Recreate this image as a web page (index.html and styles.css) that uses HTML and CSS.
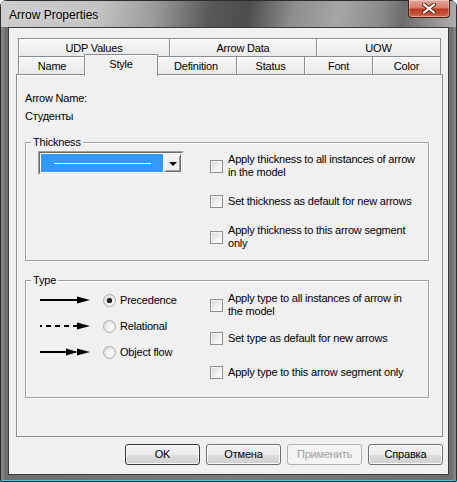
FILE: index.html
```html
<!DOCTYPE html>
<html>
<head>
<meta charset="utf-8">
<title>Arrow Properties</title>
<link rel="stylesheet" href="styles.css">
</head>
<body>
<div class="window">
  <div class="titlebar">
    <span class="title">Arrow Properties</span>
    <div class="close">
      <svg width="14" height="11" viewBox="0 0 14 11"><path d="M2 1.5 L12 9.5 M12 1.5 L2 9.5" stroke="#5a2418" stroke-width="4" stroke-linecap="round"/><path d="M2 1.5 L12 9.5 M12 1.5 L2 9.5" stroke="#fff" stroke-width="2.2" stroke-linecap="round"/></svg>
    </div>
  </div>
  <div class="client">
    <div class="tabs">
      <div class="row row1">
        <div class="tab w152">UDP Values</div>
        <div class="tab w147">Arrow Data</div>
        <div class="tab w124">UOW</div>
      </div>
      <div class="row row2">
        <div class="tab w68">Name</div>
        <div class="tab sel w74">Style</div>
        <div class="tab w81">Definition</div>
        <div class="tab w68">Status</div>
        <div class="tab w68">Font</div>
        <div class="tab w68">Color</div>
      </div>
      <div class="panel">
        <div class="name-label">Arrow Name:</div>
        <div class="name-value">Студенты</div>

        <fieldset class="group g-thick">
          <legend>Thickness</legend>
          <div class="gbody">
            <div class="left">
              <div class="combo">
                <div class="combo-in">
                  <div class="combo-sel"><span class="wline"></span></div>
                  <div class="combo-btn"><span class="tri"></span></div>
                </div>
              </div>
            </div>
            <div class="checks thick-checks">
              <div class="chk"><span class="box"></span><span>Apply thickness to all instances of arrow<br>in the model</span></div>
              <div class="chk gap16"><span class="box"></span><span>Set thickness as default for new arrows</span></div>
              <div class="chk gap16"><span class="box"></span><span>Apply thickness to this arrow segment<br>only</span></div>
            </div>
          </div>
        </fieldset>

        <fieldset class="group g-type">
          <legend>Type</legend>
          <div class="gbody">
            <div class="left">
              <div class="trow">
                <svg class="arrow" width="51" height="12" viewBox="0 0 51 12"><line x1="0" y1="6" x2="40" y2="6" stroke="#000" stroke-width="2"/><polygon points="37,2.5 50,6 37,9.5" fill="#000"/></svg>
                <span class="radio on"><span class="dot"></span></span>
                <span class="rlabel">Precedence</span>
              </div>
              <div class="trow">
                <svg class="arrow" width="51" height="12" viewBox="0 0 51 12"><line x1="0" y1="6" x2="38" y2="6" stroke="#000" stroke-width="2" stroke-dasharray="2 4 5 4 5 4 5 4 5 4"/><polygon points="37,2.5 50,6 37,9.5" fill="#000"/></svg>
                <span class="radio"></span>
                <span class="rlabel">Relational</span>
              </div>
              <div class="trow">
                <svg class="arrow" width="51" height="12" viewBox="0 0 51 12"><line x1="0" y1="6" x2="30" y2="6" stroke="#000" stroke-width="2"/><polygon points="26,2.5 38,6 26,9.5" fill="#000"/><polygon points="37,2.5 50,6 37,9.5" fill="#000"/></svg>
                <span class="radio"></span>
                <span class="rlabel">Object flow</span>
              </div>
            </div>
            <div class="checks type-checks">
              <div class="chk"><span class="box"></span><span>Apply type to all instances of arrow in<br>the model</span></div>
              <div class="chk gap14"><span class="box"></span><span>Set type as default for new arrows</span></div>
              <div class="chk gap21"><span class="box"></span><span>Apply type to this arrow segment only</span></div>
            </div>
          </div>
        </fieldset>
      </div>
    </div>
    <div class="buttons">
      <div class="btn def">OK</div>
      <div class="btn">Отмена</div>
      <div class="btn dis">Применить</div>
      <div class="btn">Справка</div>
    </div>
  </div>
</div>
</body>
</html>
```
FILE: styles.css
```css
* { box-sizing: border-box; }
html, body { margin: 0; padding: 0; background: #ffffff; }
body {
  font-family: "Liberation Sans", Arial, sans-serif;
  font-size: 11px;
  letter-spacing: -0.2px;
  color: #000;
}
.window {
  width: 457px;
  height: 482px;
  display: flex;
  flex-direction: column;
  border-radius: 7px 7px 2px 2px;
  overflow: hidden;
  background: linear-gradient(90deg, #5a5a5a 0, #8c8c8c 2px, #6e6e6e 5px, #7a7a7a 50%, #6e6e6e calc(100% - 5px), #8c8c8c calc(100% - 2px), #5a5a5a 100%);
  box-shadow: inset 0 0 0 1px #2c2c2c, inset 0 -2px 0 #49c6e6;
}
.titlebar {
  height: 27px;
  flex: none;
  display: flex;
  justify-content: space-between;
  align-items: flex-start;
  padding-left: 9px;
  background: linear-gradient(100deg, #cdcdcd 0%, #c2c2c2 22%, #9a9a9a 34%, #585858 46%, #4c4c4c 54%, #8e8e8e 64%, #a6a6a6 74%, #8a8a8a 83%, #6c6c6c 88%, #b0b0b0 100%);
  box-shadow: inset 0 1px 0 #2c2c2c, inset 1px 0 0 #2c2c2c, inset -1px 0 0 #2c2c2c;
}
.title {
  font-family: "Liberation Sans", Arial, sans-serif;
  font-size: 12px;
  letter-spacing: 0;
  line-height: 14px;
  margin-top: 8px;
  text-shadow: 0 0 6px rgba(255,255,255,0.8);
}
.close {
  width: 42px;
  height: 18px;
  margin-right: 7px;
  border: 1px solid #4a1f16;
  border-top: none;
  border-radius: 0 0 4px 4px;
  background: linear-gradient(#e5a99c 0%, #d77d6b 45%, #b8391f 55%, #c8553b 85%, #d6735a 100%);
  box-shadow: inset 0 0 0 1px rgba(255,255,255,0.35);
  display: flex;
  align-items: center;
  justify-content: center;
}
.client {
  flex: 1;
  margin: 0 8px 7px 8px;
  background: #f0f0f0;
  border: 1px solid #3a3a3a;
  display: flex;
  flex-direction: column;
  padding: 10px 5px 0 7px;
}
.tabs { width: 427px; }
.row {
  display: flex;
  margin: 0 2px;
  height: 18px;
}
.row2 { align-items: flex-end; }
.tab {
  height: 18px;
  border-top: 1px solid #898c95;
  border-right: 1px solid #898c95;
  background: linear-gradient(#f8f8f8, #e9e9e9);
  box-shadow: inset 1px 1px 0 #fff;
  display: flex;
  align-items: center;
  justify-content: center;
  line-height: 13px;
  padding-top: 1px;
}
.tab:first-child { border-left: 1px solid #898c95; }
.tab.sel {
  height: 22px;
  margin: 0 -2px -2px -2px;
  border-left: 1px solid #898c95;
  background: #f0f0f0;
  position: relative;
  z-index: 1;
  align-items: flex-start;
  padding-top: 3px;
  box-shadow: inset 1px 1px 0 #fff;
}
.w152 { width: 152px; }
.w147 { width: 147px; }
.w124 { width: 124px; }
.w68 { width: 68px; }
.w74 { width: 74px; }
.w81 { width: 81px; }
.panel {
  height: 363px;
  border: 1px solid #898c95;
  background: #f0f0f0;
  box-shadow: inset 1px 1px 0 #fff;
  padding: 17px 13px 0 8px;
}
.name-label, .name-value { line-height: 13px; }
.name-value { margin-top: 5px; }
.group {
  margin: 12px 0 0 0;
  padding: 0;
  width: 404px;
  border: 1px solid #a0a0a0;
  box-shadow: 1px 1px 0 #fff, inset 1px 1px 0 #fff;
}
.group legend {
  padding: 0 2px;
  margin-left: 5px;
  line-height: 14px;
  background: #f0f0f0;
}
.gbody { display: flex; }
.left { width: 184px; flex: none; }
.combo {
  margin: 2px 0 0 12px;
  width: 146px;
  height: 24px;
  border: 1px solid;
  border-color: #a0a0a0 #ffffff #ffffff #a0a0a0;
}
.combo-in {
  height: 100%;
  border: 1px solid;
  border-color: #696969 #e3e3e3 #e3e3e3 #696969;
  background: #fff;
  padding: 1px;
  display: flex;
}
.combo-sel {
  flex: 1;
  background: #3399ff;
  display: flex;
  align-items: center;
}
.wline {
  margin-left: 13px;
  width: 97px;
  height: 1px;
  background: #fff;
}
.combo-btn {
  width: 17px;
  margin-left: 1px;
  background: #f0f0f0;
  border: 1px solid;
  border-color: #e3e3e3 #696969 #696969 #e3e3e3;
  box-shadow: inset 1px 1px 0 #fff, inset -1px -1px 0 #a0a0a0;
  display: flex;
  align-items: center;
  justify-content: center;
}
.tri {
  width: 0;
  height: 0;
  border-left: 4px solid transparent;
  border-right: 4px solid transparent;
  border-top: 4px solid #000;
  margin-top: 1px;
}
.checks { display: flex; flex-direction: column; }
.thick-checks { padding: 4px 0 10px 0; }
.type-checks { padding: 5px 0 18px 0; }
.chk {
  display: flex;
  align-items: center;
  gap: 5px;
  line-height: 13px;
  white-space: nowrap;
}
.gap16 { margin-top: 16px; }
.gap14 { margin-top: 14px; }
.gap21 { margin-top: 21px; }
.box {
  width: 13px;
  height: 13px;
  flex: none;
  border: 1px solid #8e8f8f;
  background: linear-gradient(135deg, #d6d6d6, #f7f7f7 70%, #ffffff);
  box-shadow: inset 0 0 0 1px #f4f4f4;
}
.trow {
  display: flex;
  align-items: center;
  height: 26px;
}
.arrow { margin-left: 14px; flex: none; }
.radio {
  width: 13px;
  height: 13px;
  flex: none;
  margin-left: 12px;
  border: 1px solid #a9abab;
  border-radius: 50%;
  background: radial-gradient(circle at 65% 65%, #ffffff, #e8e8e8 60%, #d4d4d4);
  display: flex;
  align-items: center;
  justify-content: center;
}
.dot {
  width: 5px;
  height: 5px;
  border-radius: 50%;
  background: #1a1a1a;
  box-shadow: 0 0 1px #555;
}
.rlabel { margin-left: 4px; line-height: 13px; }
.buttons {
  display: flex;
  justify-content: flex-end;
  gap: 6px;
  margin-top: 7px;
}
.btn {
  width: 75px;
  height: 21px;
  border: 1px solid #707070;
  border-radius: 3px;
  background: linear-gradient(#f2f2f2 0%, #ebebeb 50%, #dddddd 51%, #cfcfcf 100%);
  box-shadow: inset 0 0 0 1px #fcfcfc;
  display: flex;
  align-items: center;
  justify-content: center;
  line-height: 13px;
}
.btn.def { border-color: #3a3a3a; box-shadow: inset 0 0 0 1px #f8f8f8; }
.btn.dis {
  color: #a0a0a0;
  border-color: #adb2b5;
  background: #f4f4f4;
  box-shadow: none;
}
```
